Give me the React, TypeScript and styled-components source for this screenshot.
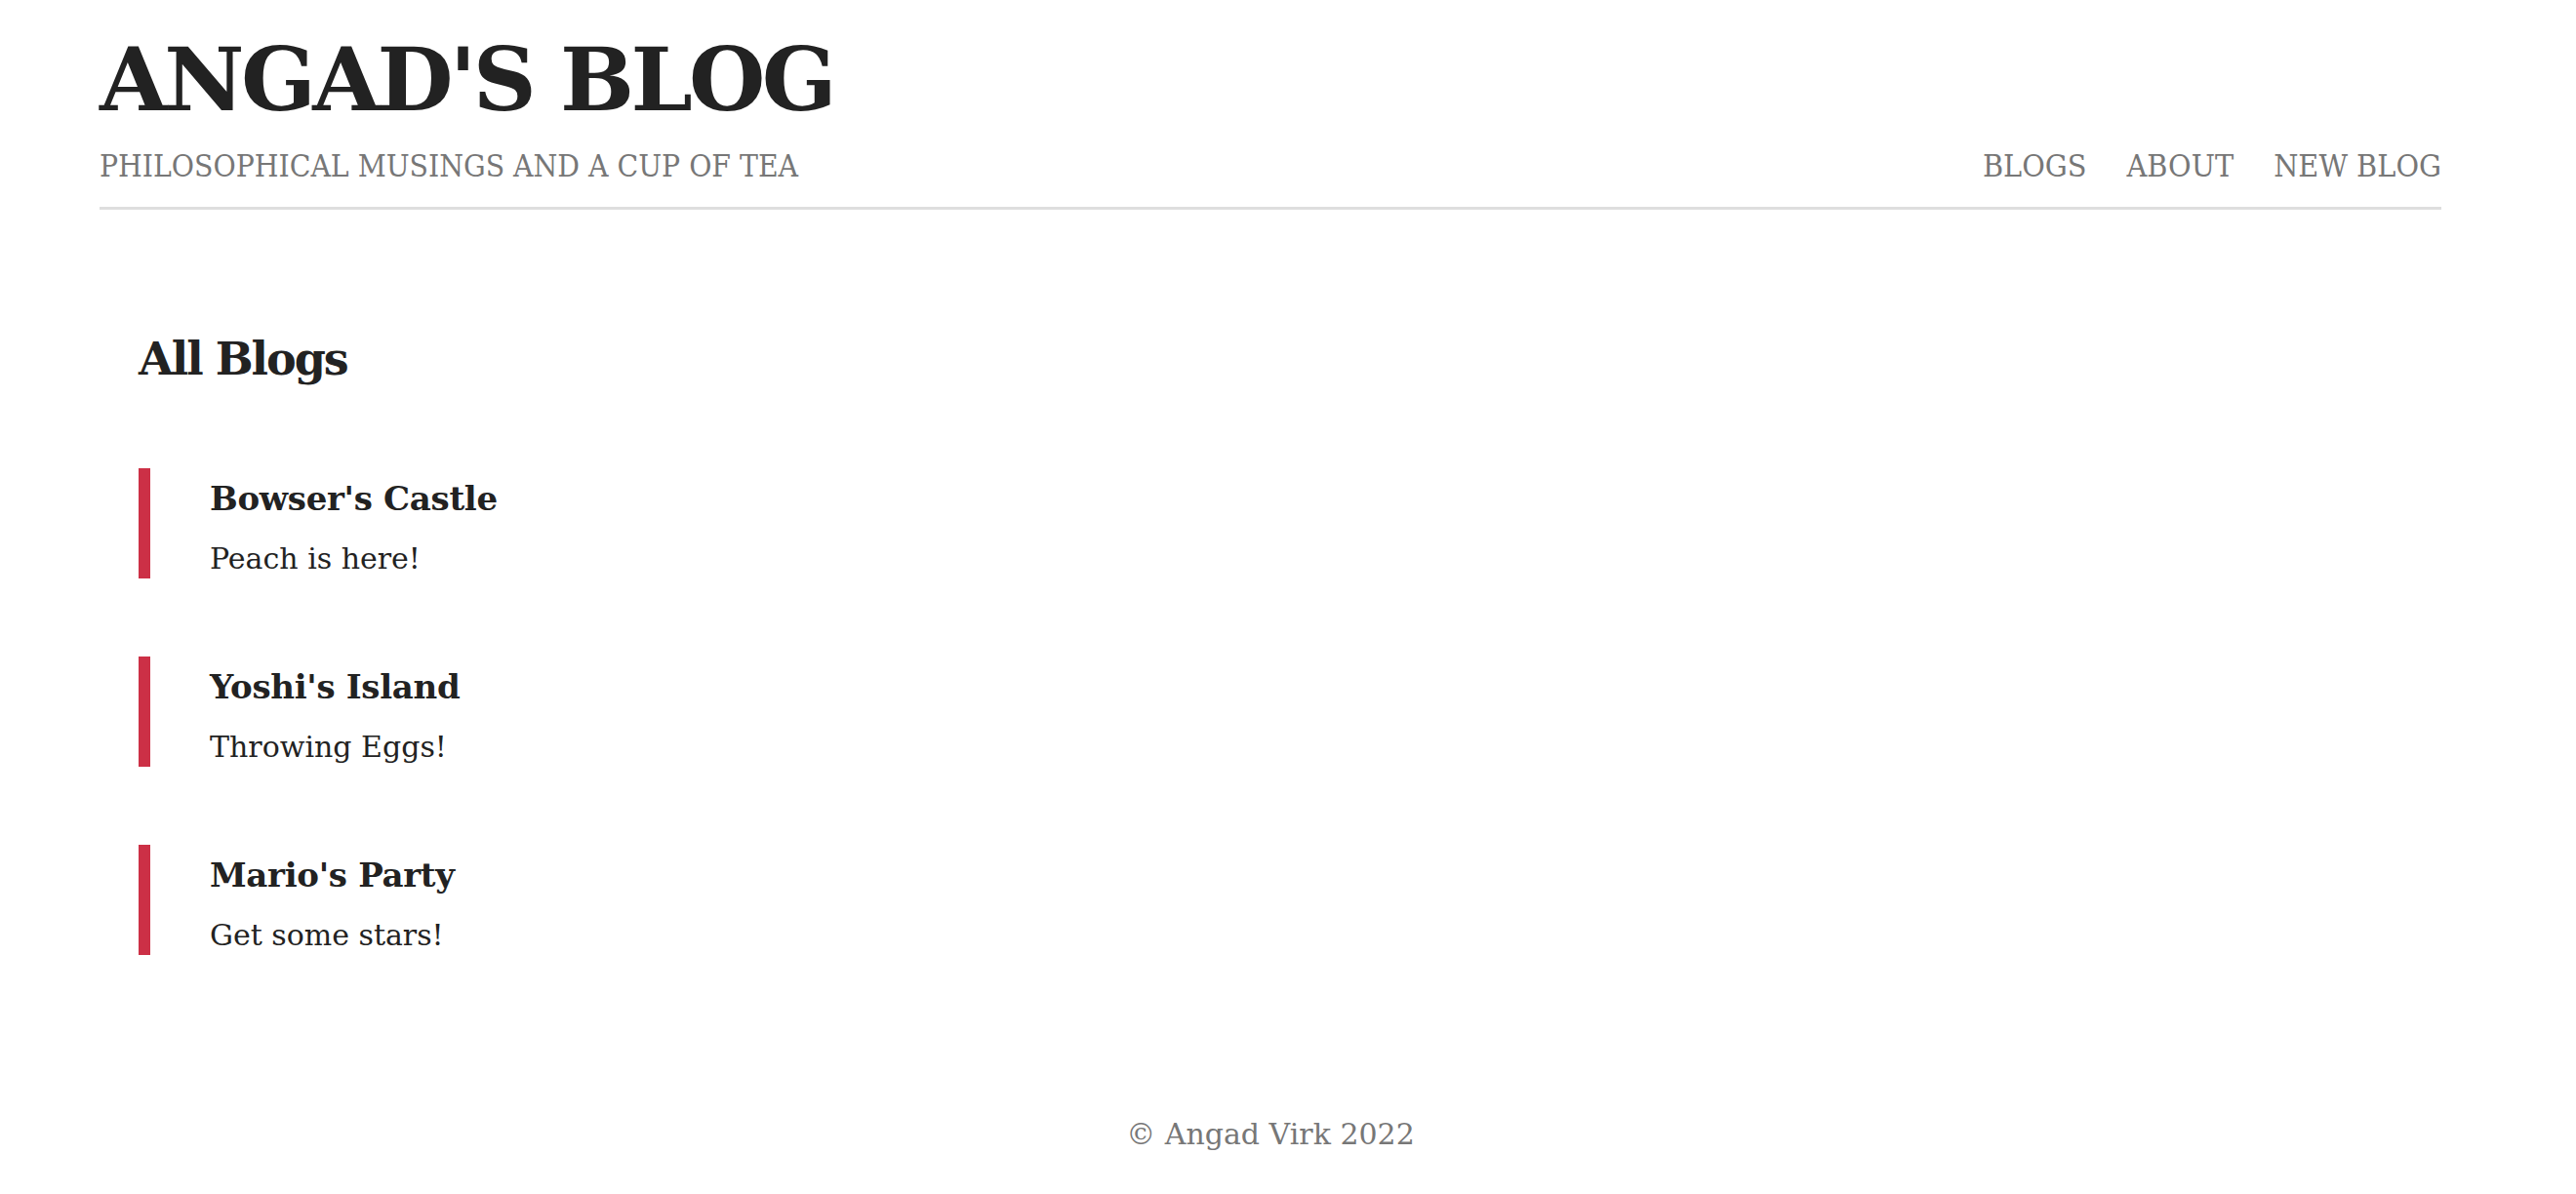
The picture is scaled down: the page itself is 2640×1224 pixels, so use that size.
import React from "react";
import styled, { createGlobalStyle } from "styled-components";

const Global = createGlobalStyle`
  html, body { margin: 0; padding: 0; background: #fff; }
  body { font-family: "DejaVu Serif", "Liberation Serif", serif; color: #222; }
`;

const Page = styled.div`
  width: 2400px;
  margin-left: 102px;
  display: flex;
  flex-direction: column;
`;

const Header = styled.header`
  display: flex;
  flex-direction: column;
  padding-top: 26px;
  border-bottom: 3px solid #dedede;
  padding-bottom: 22px;
`;

const Title = styled.h1`
  margin: 0;
  font-size: 90px;
  line-height: 110px;
  font-weight: 700;
  color: #222;
  letter-spacing: -3.6px;
`;

const SubRow = styled.div`
  display: flex;
  justify-content: space-between;
  align-items: baseline;
  margin-top: 14px;
`;

const Tagline = styled.p`
  margin: 0;
  font-size: 31.5px;
  line-height: 40px;
  color: #777;
  text-transform: uppercase;
  font-stretch: condensed;
  font-family: "DejaVu Serif Condensed", "DejaVu Serif", serif;
`;

const Nav = styled.nav`
  display: flex;
  gap: 41px;
`;

const NavLink = styled.a`
  font-size: 32px;
  line-height: 40px;
  color: #777;
  text-decoration: none;
  text-transform: uppercase;
  font-stretch: condensed;
  font-family: "DejaVu Serif Condensed", "DejaVu Serif", serif;
`;

const Main = styled.main`
  padding: 125px 0 0 40px;
  display: flex;
  flex-direction: column;
`;

const Heading = styled.h2`
  margin: 0 0 84px;
  font-size: 46px;
  line-height: 56px;
  font-weight: 700;
  letter-spacing: -2px;
`;

const List = styled.div`
  display: flex;
  flex-direction: column;
  gap: 80px;
`;

const Card = styled.a`
  display: flex;
  flex-direction: column;
  height: 113px;
  box-sizing: border-box;
  border-left: 12px solid #cc3046;
  padding: 9px 0 0 61px;
  text-decoration: none;
  color: #222;
`;

const CardTitle = styled.h3`
  margin: 0;
  font-size: 34px;
  line-height: 44px;
  font-weight: 700;
  letter-spacing: -0.3px;
`;

const CardText = styled.p`
  margin: 20px 0 0;
  font-size: 30px;
  line-height: 40px;
`;

const Footer = styled.footer`
  margin-top: 164px;
  text-align: center;
  font-size: 30px;
  line-height: 40px;
  color: #777;
`;

const blogs = [
  { title: "Bowser's Castle", body: "Peach is here!" },
  { title: "Yoshi's Island", body: "Throwing Eggs!" },
  { title: "Mario's Party", body: "Get some stars!" },
];

export default function App() {
  return (
    <>
      <Global />
      <Page>
        <Header>
          <Title>ANGAD'S BLOG</Title>
          <SubRow>
            <Tagline>Philosophical musings and a cup of tea</Tagline>
            <Nav>
              <NavLink href="#">Blogs</NavLink>
              <NavLink href="#">About</NavLink>
              <NavLink href="#">New Blog</NavLink>
            </Nav>
          </SubRow>
        </Header>
        <Main>
          <Heading>All Blogs</Heading>
          <List>
            {blogs.map((b) => (
              <Card href="#" key={b.title}>
                <CardTitle>{b.title}</CardTitle>
                <CardText>{b.body}</CardText>
              </Card>
            ))}
          </List>
        </Main>
        <Footer>© Angad Virk 2022</Footer>
      </Page>
    </>
  );
}
